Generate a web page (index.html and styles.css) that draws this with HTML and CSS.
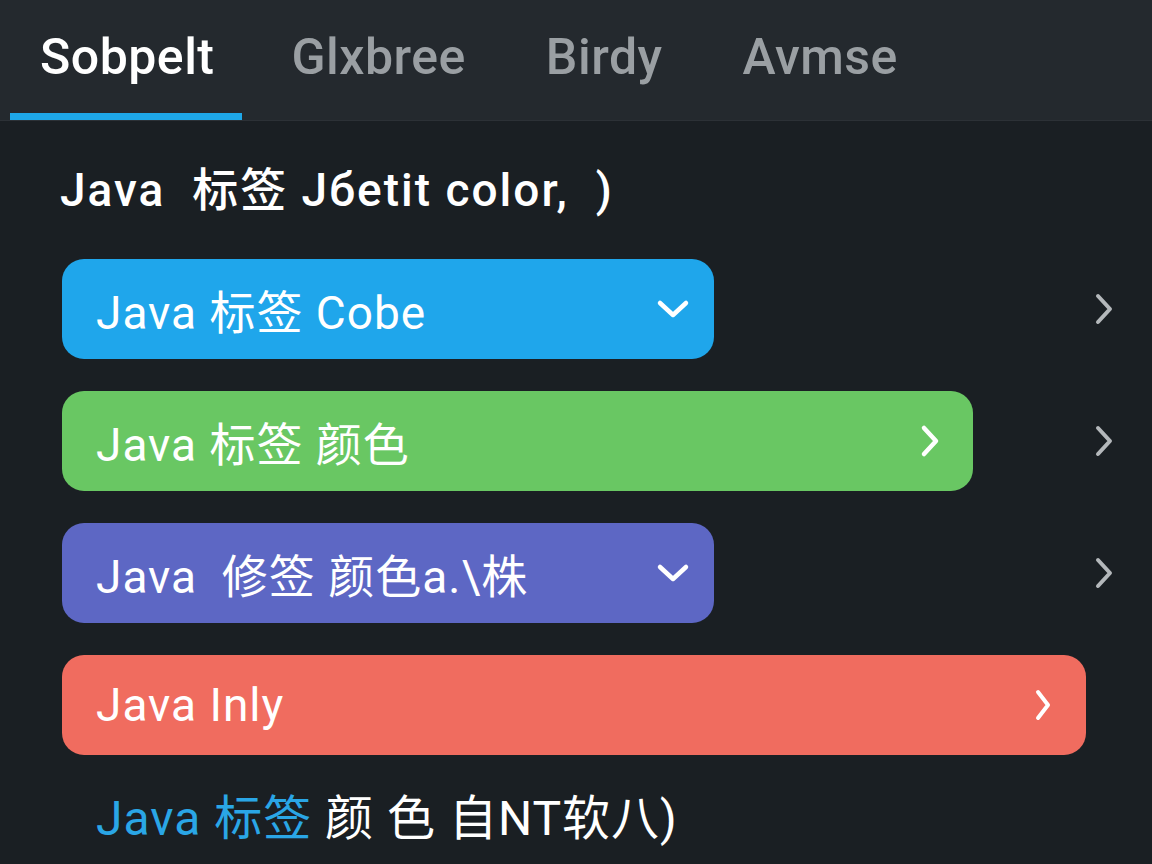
FILE: index.html
```html
<!DOCTYPE html>
<html lang="zh">

<head>
    <meta charset="UTF-8">
    <title>Java 标签颜色</title>
    <link rel="stylesheet" href="styles.css">
</head>

<body>
    <div class="tabs">
        <div class="tab active">Sobpelt</div>
        <div class="tab">Glxbree</div>
        <div class="tab">Birdy</div>
        <div class="tab">Avmse</div>
    </div>

    <div class="content">
        <h1 class="title">Java&nbsp; 标签 Jбetit color,&nbsp; )</h1>

        <div class="list">
            <div class="row">
                <div class="card blue short">
                    <span>Java 标签 Cobe</span>
                    <svg class="down" width="34" height="22" viewBox="0 0 34 22"><path d="M4 5 L17 17 L30 5" fill="none" stroke="#fff" stroke-width="4.5" stroke-linecap="round" stroke-linejoin="round"/></svg>
                </div>
                <svg class="more" width="22" height="34" viewBox="0 0 22 34"><path d="M5 4 L17 17 L5 30" fill="none" stroke="#b4b8bb" stroke-width="4" stroke-linecap="round" stroke-linejoin="round"/></svg>
            </div>

            <div class="row">
                <div class="card green mid">
                    <span>Java 标签 颜色</span>
                    <svg class="right" width="22" height="34" viewBox="0 0 22 34"><path d="M5 4 L17 17 L5 30" fill="none" stroke="#fff" stroke-width="4.5" stroke-linecap="round" stroke-linejoin="round"/></svg>
                </div>
                <svg class="more" width="22" height="34" viewBox="0 0 22 34"><path d="M5 4 L17 17 L5 30" fill="none" stroke="#b4b8bb" stroke-width="4" stroke-linecap="round" stroke-linejoin="round"/></svg>
            </div>

            <div class="row">
                <div class="card purple short">
                    <span>Java&nbsp; 修签 颜色a.\株</span>
                    <svg class="down" width="34" height="22" viewBox="0 0 34 22"><path d="M4 5 L17 17 L30 5" fill="none" stroke="#fff" stroke-width="4.5" stroke-linecap="round" stroke-linejoin="round"/></svg>
                </div>
                <svg class="more" width="22" height="34" viewBox="0 0 22 34"><path d="M5 4 L17 17 L5 30" fill="none" stroke="#b4b8bb" stroke-width="4" stroke-linecap="round" stroke-linejoin="round"/></svg>
            </div>

            <div class="row">
                <div class="card coral long">
                    <span>Java Inly</span>
                    <svg class="right" width="22" height="34" viewBox="0 0 22 34"><path d="M6 4 L16 17 L6 30" fill="none" stroke="#fff" stroke-width="4" stroke-linecap="round" stroke-linejoin="round"/></svg>
                </div>
            </div>
        </div>

        <p class="footer"><span class="accent">Java 标签</span> 颜 色 自NT软八)</p>
    </div>
</body>

</html>
```

FILE: styles.css
```css
body {
    margin: 0;
    background: #1a1f23;
    font-family: "Roboto", "Noto Sans CJK SC", sans-serif;
    color: #ffffff;
}

.tabs {
    display: flex;
    gap: 20px;
    height: 121px;
    padding-left: 10px;
    background: #24292e;
    border-bottom: 1px solid #2c3136;
    box-sizing: border-box;
}

.tab {
    padding: 0 30px;
    font-size: 50px;
    font-weight: 500;
    letter-spacing: 0.5px;
    color: #9a9fa3;
    line-height: 114px;
    border-bottom: 7px solid transparent;
}

.tab.active {
    color: #ffffff;
    padding-right: 27px;
    border-bottom-color: #1ea7e8;
}

.content {
    padding-left: 62px;
}

.title {
    margin: 42px 0 0 -2px;
    font-size: 46px;
    font-weight: 500;
    letter-spacing: 2px;
    line-height: 54px;
}

.list {
    display: flex;
    flex-direction: column;
    gap: 32px;
    margin-top: 42px;
}

.row {
    display: flex;
    align-items: center;
    justify-content: space-between;
    padding-right: 37px;
}

.card {
    height: 100px;
    border-radius: 22px;
    display: flex;
    align-items: center;
    justify-content: space-between;
    padding: 0 24px 0 34px;
    box-sizing: border-box;
    font-size: 46px;
    letter-spacing: 1px;
    color: #ffffff;
}

.short {
    width: 652px;
}

.mid {
    width: 911px;
    padding-right: 32px;
}

.long {
    width: 1024px;
    padding-right: 32px;
}

.blue {
    background: #1fa6eb;
}

.green {
    background: #69c763;
}

.purple {
    background: #5d67c4;
}

.coral {
    background: #f06c5f;
}

.footer {
    margin: 36px 0 0 34px;
    font-size: 48px;
    letter-spacing: 1px;
    line-height: 56px;
}

.accent {
    color: #2aa6e6;
}
```
